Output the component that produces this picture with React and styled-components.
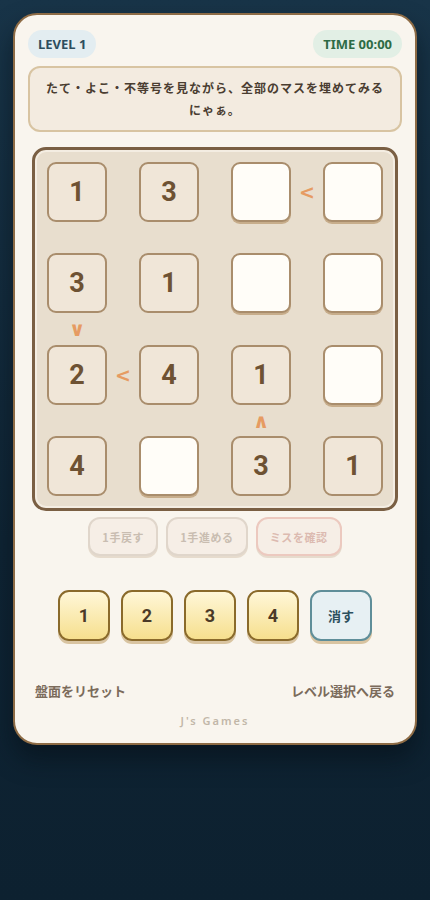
import React from 'react'
import styled, { createGlobalStyle } from 'styled-components'

const GlobalStyle = createGlobalStyle`
  html, body {
    margin: 0;
    padding: 0;
    background: linear-gradient(180deg, #183448 0%, #0f2434 60%, #0d2130 100%);
    min-height: 900px;
    font-family: "Noto Sans", "Noto Sans CJK JP", sans-serif;
  }
`

const Page = styled.div`
  padding: 13px;
  width: 404px;
`

const Card = styled.div`
  background: #f9f5ee;
  border: 2px solid #8d6b45;
  border-radius: 24px;
  box-sizing: border-box;
  padding: 15px 13px 15px;
  box-shadow: 0 14px 24px rgba(5, 15, 22, 0.55);
  display: flex;
  flex-direction: column;
`

const TopBar = styled.div`
  display: flex;
  justify-content: space-between;
  align-items: center;
`

const Pill = styled.div`
  height: 28px;
  padding: 0 10px;
  border-radius: 14px;
  display: flex;
  align-items: center;
  font-size: 13px;
  font-weight: 700;
  background: ${p => p.$bg};
  color: ${p => p.$color};
`

const Hint = styled.div`
  margin-top: 8px;
  background: #f3ebe0;
  border: 2px solid #d8c4a2;
  border-radius: 12px;
  padding: 9px 10px;
  text-align: center;
  font-family: "Noto Sans CJK JP", sans-serif;
  font-size: 12px;
  font-weight: 700;
  line-height: 22px;
  letter-spacing: 1px;
  color: #4a3d31;
`

const Board = styled.div`
  margin: 15px 4px 0;
  background: #e8dece;
  border: 3px solid #7a5f43;
  border-radius: 14px;
  padding: 12px;
  box-shadow: inset 0 0 0 2px #f4ede2;
  display: grid;
  grid-template-columns: 60px 32px 60px 32px 60px 32px 60px;
  grid-template-rows: 60px 31px 60px 32px 60px 31px 60px;
`

const Cell = styled.div`
  box-sizing: border-box;
  border: 2px solid #a98d6c;
  border-radius: 9px;
  background: ${p => (p.$given ? '#f0e6d8' : '#fffdf8')};
  box-shadow: ${p => (p.$given ? 'none' : '0 2px 0 #c7ad8b')};
  display: flex;
  align-items: center;
  justify-content: center;
  font-family: Roboto, "Noto Sans", sans-serif;
  font-size: 27px;
  font-weight: 700;
  color: #6e5233;
`

const Sign = styled.div`
  display: flex;
  align-items: center;
  justify-content: center;
  color: #e69b62;
  font-size: ${p => (p.$vertical ? '20px' : '19px')};
  font-weight: 700;
  font-family: "DejaVu Sans", sans-serif;
`

const Actions = styled.div`
  margin-top: 6px;
  display: flex;
  justify-content: center;
  gap: 8px;
`

const ActionButton = styled.button`
  height: 39px;
  padding: 0 12px;
  border-radius: 12px;
  border: 2px solid ${p => (p.$warn ? '#ecc9bf' : '#e0d6cb')};
  background: #f6eee6;
  color: ${p => (p.$warn ? '#dcbab0' : '#c9bdb1')};
  box-shadow: 0 2px 0 #e6dbcd;
  font-family: "Noto Sans CJK JP", sans-serif;
  font-size: 11px;
  letter-spacing: 0.6px;
  font-weight: 700;
`

const Pad = styled.div`
  margin-top: 34px;
  display: flex;
  justify-content: center;
  gap: 11px;
`

const PadButton = styled.button`
  width: ${p => (p.$clear ? '62px' : '52px')};
  height: 51px;
  box-sizing: border-box;
  border-radius: 11px;
  border: 2px solid ${p => (p.$clear ? '#5f8e99' : '#8a6a2b')};
  background: ${p => (p.$clear ? '#e7f0f3' : 'linear-gradient(180deg, #fff7d8 0%, #f6df8e 100%)')};
  color: ${p => (p.$clear ? '#2c4f5d' : '#4b3a28')};
  box-shadow: 0 3px 0 #d9c4a1;
  font-family: ${p => (p.$clear ? '"Noto Sans CJK JP", sans-serif' : 'Roboto, "Noto Sans", sans-serif')};
  font-size: ${p => (p.$clear ? '13px' : '18px')};
  font-weight: 700;
`

const Footer = styled.div`
  margin-top: 40px;
  padding: 0 7px;
  display: flex;
  justify-content: space-between;
`

const FooterLink = styled.span`
  font-family: "Noto Sans CJK JP", sans-serif;
  font-size: 13px;
  font-weight: 700;
  color: #7b6b5b;
`

const Brand = styled.div`
  margin-top: 13px;
  text-align: center;
  font-size: 11px;
  letter-spacing: 2px;
  color: #c2b7a8;
  font-weight: 600;
`

const board = [
  [1, 3, null, null],
  [3, 1, null, null],
  [2, 4, 1, null],
  [4, null, 3, 1]
]

// '<' between a cell and its right neighbour, keyed row-col
const hSigns = { '0-2': '<', '2-0': '<' }
// signs between a cell and the one below it, keyed row-col
const vSigns = { '1-0': '\u2228', '2-2': '\u2227' }

export default function App () {
  const items = []
  for (let gr = 0; gr < 7; gr++) {
    for (let gc = 0; gc < 7; gc++) {
      const key = `${gr}-${gc}`
      if (gr % 2 === 0 && gc % 2 === 0) {
        const v = board[gr / 2][gc / 2]
        items.push(<Cell key={key} $given={v !== null}>{v}</Cell>)
      } else if (gr % 2 === 0) {
        items.push(<Sign key={key}>{hSigns[`${gr / 2}-${(gc - 1) / 2}`] || ''}</Sign>)
      } else if (gc % 2 === 0) {
        items.push(<Sign key={key} $vertical>{vSigns[`${(gr - 1) / 2}-${gc / 2}`] || ''}</Sign>)
      } else {
        items.push(<div key={key} />)
      }
    }
  }

  return (
    <Page>
      <GlobalStyle />
      <Card>
        <TopBar>
          <Pill $bg={'#e3edf1'} $color={'#2d4d5e'}>LEVEL 1</Pill>
          <Pill $bg={'#e2efe5'} $color={'#2e6b45'}>TIME 00:00</Pill>
        </TopBar>
        <Hint>たて・よこ・不等号を見ながら、全部のマスを埋めてみるにゃぁ。</Hint>
        <Board>{items}</Board>
        <Actions>
          <ActionButton>1手戻す</ActionButton>
          <ActionButton>1手進める</ActionButton>
          <ActionButton $warn>ミスを確認</ActionButton>
        </Actions>
        <Pad>
          {[1, 2, 3, 4].map(n => <PadButton key={n}>{n}</PadButton>)}
          <PadButton $clear>消す</PadButton>
        </Pad>
        <Footer>
          <FooterLink>盤面をリセット</FooterLink>
          <FooterLink>レベル選択へ戻る</FooterLink>
        </Footer>
        <Brand>J's Games</Brand>
      </Card>
    </Page>
  )
}
